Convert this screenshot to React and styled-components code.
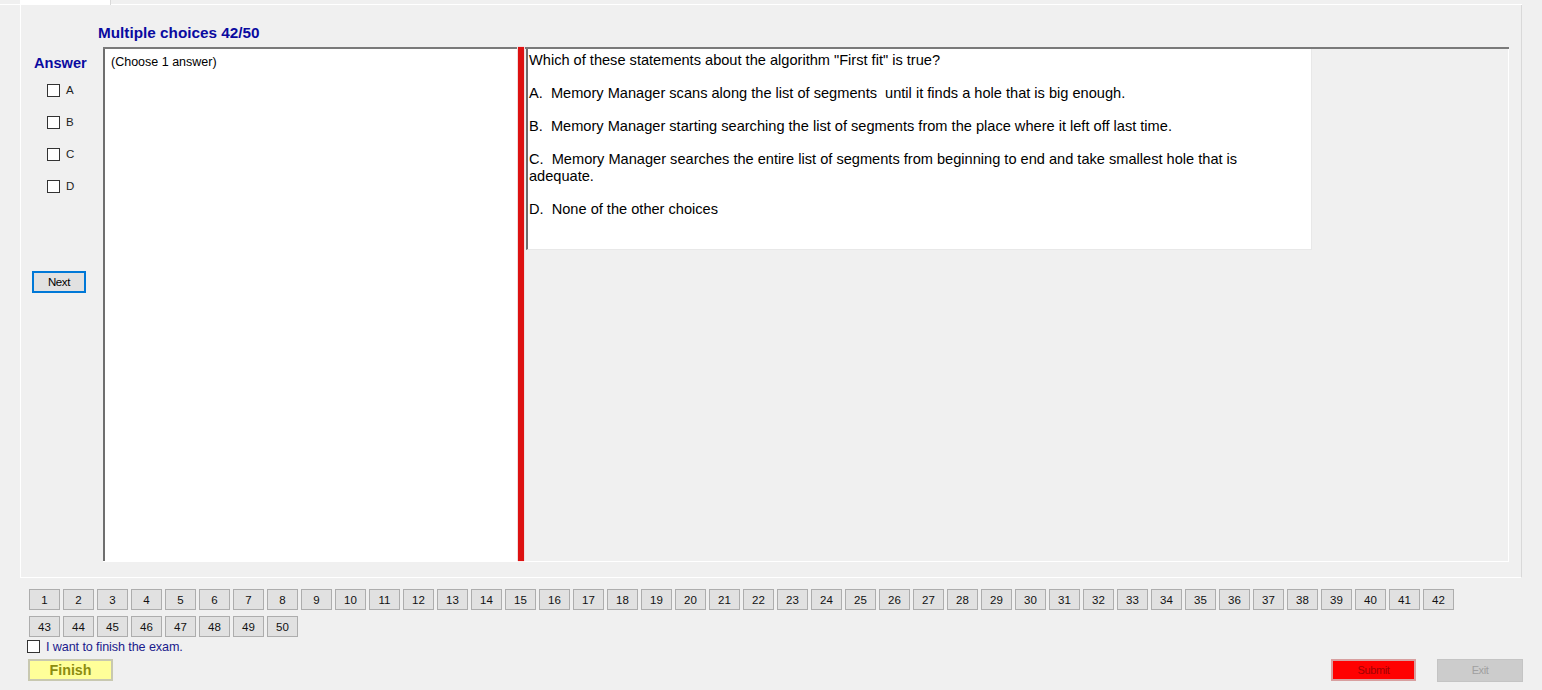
import React from "react";
import styled, { createGlobalStyle } from "styled-components";

const Global = createGlobalStyle`
  html, body { margin: 0; padding: 0; background: #f0f0f0; }
  body { font-family: "Liberation Sans", Arial, sans-serif; color: #000; }
  * { box-sizing: border-box; }
`;

const Page = styled.div`
  width: 1542px;
  height: 690px;
  display: flex;
  flex-direction: column;
  overflow: hidden;
`;

const TabStrip = styled.div`
  height: 5px;
  display: flex;
  padding-left: 20px;
  border-bottom: 1px solid #ffffff;
  margin-right: 20px;
`;

const Tab = styled.div`
  width: 91px;
  height: 6px;
  background: #ffffff;
  border-right: 1px solid #d9d9d9;
`;

const TabPage = styled.div`
  margin-left: 20px;
  width: 1502px;
  height: 573px;
  border-left: 1px solid #ffffff;
  border-right: 1px solid #d9d9d9;
  border-bottom: 1px solid #ffffff;
  background: #f0f0f0;
  display: flex;
  flex-direction: column;
`;

const Title = styled.div`
  margin: 19px 0 0 77px;
  height: 23px;
  font-weight: bold;
  font-size: 15.3px;
  color: #0a0aa0;
`;

const Body = styled.div`
  display: flex;
  height: 515px;
`;

const AnswerCol = styled.div`
  width: 82px;
  display: flex;
  flex-direction: column;
  padding-top: 8px;
`;

const AnswerLabel = styled.div`
  margin-left: 13px;
  font-weight: bold;
  font-size: 14.6px;
  color: #0a0aa0;
  height: 29px;
`;

const Choice = styled.label`
  display: flex;
  gap: 6px;
  margin-left: 26px;
  height: 32px;
  align-items: flex-start;
  font-size: 11.5px;
  color: #222;
`;

const Box = styled.span`
  width: 13px;
  height: 13px;
  border: 1px solid #333;
  background: #fff;
  display: inline-block;
  flex: none;
`;

const ChoiceText = styled.span`
  line-height: 12px;
`;

const NextButton = styled.button`
  margin: 59px 0 0 11px;
  width: 54px;
  height: 22px;
  border: 2px solid #0078d7;
  background: #e1e1e1;
  font-family: "Liberation Sans", Arial, sans-serif;
  font-size: 11.5px;
  color: #000;
  padding: 0;
  letter-spacing: -0.4px;
`;

const Split = styled.div`
  width: 1406px;
  height: 515px;
  display: flex;
  border-top: 2px solid #7a7a7a;
  border-bottom: 1px solid #ffffff;
`;

const LeftPanel = styled.div`
  width: 414px;
  background: #ffffff;
  border-left: 2px solid #6e6e6e;
  padding: 6px 0 0 6px;
  font-size: 12.5px;
`;

const Splitter = styled.div`
  width: 8px;
  margin-top: -2px;
  display: flex;
  justify-content: center;
  background: #f0f0f0;
`;

const SplitterBar = styled.div`
  width: 6px;
  background: #dd1111;
  box-shadow: 0 0 1px #f08080;
`;

const RightPanel = styled.div`
  flex: 1;
  background: #f0f0f0;
  border-right: 1px solid #ffffff;
  padding: 0 0 0 1px;
`;

const QuestionBox = styled.div`
  width: 786px;
  height: 201px;
  background: #ffffff;
  border-left: 2px solid #6e6e6e;
  border-right: 1px solid #e8e8e8;
  border-bottom: 1px solid #e8e8e8;
  padding: 3px 30px 0 1px;
  font-size: 14.6px;
  line-height: 16.7px;
`;

const Para = styled.p`
  margin: 0 0 16.3px 0;
`;

const Bottom = styled.div`
  padding: 11px 0 0 29px;
  display: flex;
  flex-direction: column;
`;

const NumRow = styled.div`
  display: flex;
  gap: 3px;
  margin-bottom: 6px;
`;

const NumButton = styled.button`
  width: 31px;
  height: 21px;
  padding: 0;
  background: #e1e1e1;
  border: 1px solid #adadad;
  font-family: "Liberation Sans", Arial, sans-serif;
  font-size: 11.5px;
  color: #111;
`;

const FinishCheck = styled.label`
  display: flex;
  align-items: center;
  gap: 6px;
  margin: -5px 0 0 -2px;
  height: 17px;
  font-size: 12.6px;
  color: #1a1a8c;
  letter-spacing: -0.1px;
`;

const BottomBar = styled.div`
  display: flex;
  align-items: center;
  margin-top: 4px;
  height: 22px;
  padding-right: 19px;
`;

const FinishButton = styled.button`
  margin-left: -1px;
  width: 85px;
  height: 22px;
  background: #ffff99;
  border: 2px solid #c8c8b0;
  font-family: "Liberation Sans", Arial, sans-serif;
  font-weight: bold;
  font-size: 14.3px;
  color: #8c8c10;
  padding: 0;
`;

const Spacer = styled.div`
  flex: 1;
`;

const SubmitButton = styled.button`
  width: 85px;
  height: 22px;
  background: #ff0000;
  border: 2px solid #d8a0a0;
  font-family: "Liberation Sans", Arial, sans-serif;
  font-size: 11px;
  color: #a00000;
  padding: 0;
  margin-right: 21px;
  letter-spacing: -0.4px;
`;

const ExitButton = styled.button`
  width: 86px;
  height: 23px;
  background: #cccccc;
  border: 1px solid #c4c4c4;
  font-family: "Liberation Sans", Arial, sans-serif;
  font-size: 11px;
  color: #a0a0a0;
  padding: 0;
  letter-spacing: -0.4px;
`;

const row1 = Array.from({ length: 42 }, (_, i) => i + 1);
const row2 = Array.from({ length: 8 }, (_, i) => i + 43);

export default function App() {
  return (
    <Page>
      <Global />
      <TabStrip>
        <Tab />
      </TabStrip>
      <TabPage>
        <Title>Multiple choices 42/50</Title>
        <Body>
          <AnswerCol>
            <AnswerLabel>Answer</AnswerLabel>
            {["A", "B", "C", "D"].map((c) => (
              <Choice key={c}>
                <Box />
                <ChoiceText>{c}</ChoiceText>
              </Choice>
            ))}
            <NextButton>Next</NextButton>
          </AnswerCol>
          <Split>
            <LeftPanel>(Choose 1 answer)</LeftPanel>
            <Splitter>
              <SplitterBar />
            </Splitter>
            <RightPanel>
              <QuestionBox>
                <Para>Which of these statements about the algorithm "First fit" is true?</Para>
                <Para>A.&nbsp; Memory Manager scans along the list of segments&nbsp; until it finds a hole that is big enough.</Para>
                <Para>B.&nbsp; Memory Manager starting searching the list of segments from the place where it left off last time.</Para>
                <Para>C.&nbsp; Memory Manager searches the entire list of segments from beginning to end and take smallest hole that is adequate.</Para>
                <Para>D.&nbsp; None of the other choices</Para>
              </QuestionBox>
            </RightPanel>
          </Split>
        </Body>
      </TabPage>
      <Bottom>
        <NumRow>
          {row1.map((n) => (
            <NumButton key={n}>{n}</NumButton>
          ))}
        </NumRow>
        <NumRow>
          {row2.map((n) => (
            <NumButton key={n}>{n}</NumButton>
          ))}
        </NumRow>
        <FinishCheck>
          <Box />
          I want to finish the exam.
        </FinishCheck>
        <BottomBar>
          <FinishButton>Finish</FinishButton>
          <Spacer />
          <SubmitButton>Submit</SubmitButton>
          <ExitButton>Exit</ExitButton>
        </BottomBar>
      </Bottom>
    </Page>
  );
}
